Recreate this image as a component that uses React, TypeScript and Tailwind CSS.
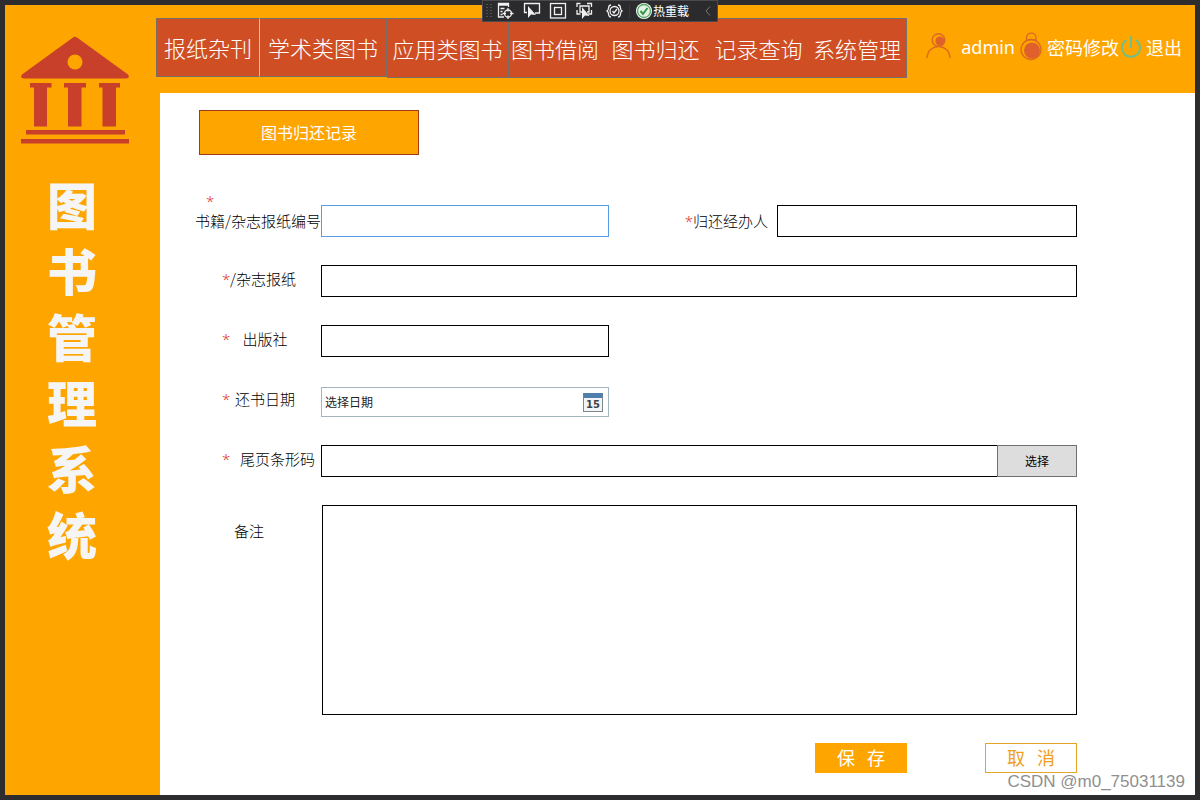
import React, { useState } from 'react';

const navItems = [
    { text: '报纸杂刊', size: 'w-[104px] h-[59px] border-l border-r-[#d9d36a]' },
    { text: '学术类图书', size: 'w-[127px] h-[59px] border-r-[#77706a]' },
    { text: '应用类图书', size: 'w-[122px] h-[60px] border-r-[#77706a]' },
    { text: '图书借阅', size: 'w-[93px] h-[60px] border-r-[#77706a]' },
    { text: '图书归还', size: 'w-[108px] h-[60px] border-r-[#77706a]' },
    { text: '记录查询', size: 'w-[98px] h-[60px] border-r-[#77706a]' },
    { text: '系统管理', size: 'w-[99px] h-[60px] border-r-[#77706a]' },
];

const Logo = () => (
    <svg viewBox="0 0 108 108" className="w-[108px] h-[108px]" fill="#c8402a">
        <path d="M52 1.5 Q54 0 56 1.5 L107 38.5 Q109.5 42.5 105 42.5 H3 Q-1.5 42.5 1 38.5 Z" />
        <circle cx="54" cy="26" r="7.5" fill="#ffa500" />
        <path d="M9 47h21.500v4.500h-4.500v39h-13v-39h-4zM43 47h22v4.500h-4.500v39h-13.500v-39h-4zM78 47h21v4.500h-4v39h-13.500v-39h-3.500z" />
        <path d="M5 94h99v4.500H5zM0 103h108v4.500H0z" />
    </svg>
);

const UserIcon = () => (
    <svg viewBox="0 0 26 30" className="w-[26px] h-[30px]" fill="none" stroke="#dc6a1e" strokeWidth="1.4">
        <circle cx="12.500" cy="8" r="6.300" />
        <circle cx="14" cy="9" r="4.600" fill="#e0602c" stroke="none" />
        <path d="M1 26 C1.500 18 7 14.500 12.500 14.500 C18 14.500 23.500 18 24 26" />
    </svg>
);

const LockIcon = () => (
    <svg viewBox="0 0 22 30" className="w-[22px] h-[30px]" fill="none" stroke="#dc6a1e" strokeWidth="1.3">
        <path d="M6.500 8.500 V6 C6.500 -0.500 16 -0.500 16 6 V8.500 Q11 6.500 6.500 8.500" />
        <circle cx="11" cy="17.500" r="10" />
        <circle cx="12" cy="18.500" r="8" fill="#e0602c" stroke="none" />
    </svg>
);

const PowerIcon = () => (
    <svg viewBox="0 0 20 22" className="w-5 h-[22px]" fill="none" stroke="#6fbf86" strokeWidth="2">
        <path d="M10 0v12" />
        <path d="M5.500 4 A9 9 0 1 0 14.500 4" />
    </svg>
);

// debug bar floating over the window
const DebugBar = () => (
    <div className="absolute top-0 left-1/2 -translate-x-1/2 w-[236px] h-[22px] bg-[#2b2b2e] border border-[#4a4a4f] flex items-center text-white">
        <svg viewBox="0 0 152 20" className="w-[152px] h-5 shrink-0" fill="none" stroke="#f0f0f0" strokeWidth="1.3">
            <path d="M4 3v14M8 3v14" stroke="#66666c" strokeDasharray="1 2" />
            <path d="M21 16H15.500V2.500H25.500V6" />
            <path d="M15 3.500h11" strokeWidth="2.5" />
            <path d="M17.500 7.500h4M17.500 10.500h2M17.500 13.500h2" />
            <circle cx="25" cy="12.500" r="3.500" />
            <path d="M25 7v3.500M25 14.500V18M19.500 12.500H23M27 12.500h3.500" />
            <path d="M44 11.500h-2.500V2.500h15V12H52" />
            <path d="M45 5v12l3-3.500 5 .5z" fill="#f0f0f0" stroke="none" />
            <rect x="67.500" y="2.500" width="15" height="14.500" />
            <rect x="71.500" y="6.500" width="7" height="7" />
            <path d="M94 6V2.500h3.500M104 2.500h4.500V6M94 9v4h3.500M108.500 9v4H105M99 11h-2V5h9v6h-2" />
            <path d="M99 6v12l3-3.500 4.500.5z" fill="#f0f0f0" stroke="none" />
            <path d="M128 4c-4 0-1 4.500-4 6 3 1.500 0 6 4 6M135 4c4 0 1 4.500 4 6-3 1.500 0 6-4 6" />
            <circle cx="131.500" cy="10" r="4.500" />
            <path d="M129.500 10l1.500 2 3-4" />
            <path d="M146.500 4v13" stroke="#3b3b3f" />
        </svg>
        <svg viewBox="0 0 18 18" className="w-[18px] h-[18px] shrink-0">
            <circle cx="9" cy="9" r="8" fill="#fff" />
            <circle cx="9" cy="9" r="6.500" fill="#e4f2e6" stroke="#55a566" strokeWidth="1.300" />
            <path d="M5.500 9l2.500 3 4.500-6" fill="none" stroke="#2f9a45" strokeWidth="2" />
        </svg>
        <span className="text-[12px] leading-5 whitespace-nowrap">热重载</span>
        <svg viewBox="0 0 6 10" className="w-1.5 h-2.5 ml-auto mr-1.5" fill="none" stroke="#77777c">
            <path d="M5 .5L1 5l4 4.500" />
        </svg>
    </div>
);

interface FieldLabelProps {
    htmlFor: string;
    text: string;
    required?: boolean;
    textClass?: string;
}

const Star = () => <span className="text-[#e03030] font-['Noto_Sans',sans-serif]">*</span>;

const FieldLabel: React.FC<FieldLabelProps> = ({ htmlFor, text, required = true, textClass = 'justify-center w-[62px]' }) => (
    <label htmlFor={htmlFor} className="flex pl-[26px] h-7 leading-7 whitespace-nowrap">
        <span className="w-3 shrink-0">{required && <Star />}</span>
        <span className={`flex ${textClass}`}>{text}</span>
    </label>
);

const App: React.FC = () => {
    const [date, setDate] = useState('');

    return (
        <div className="relative min-h-screen bg-[#2d2d30] p-[5px] flex font-['Noto_Sans_CJK_SC',sans-serif]">
            <div className="flex flex-1 bg-[#ffa500]">
                <aside className="w-[151px] shrink-0 pl-4 pt-[31px]">
                    <Logo />
                    <h1 className="mt-[26px] w-[102px] flex flex-col items-center text-[50px] leading-[66px] font-black text-[#f5f5f5]">
                        {'图书管理系统'.split('').map((c) => (
                            <span key={c}>{c}</span>
                        ))}
                    </h1>
                </aside>

                <div className="flex flex-col flex-1">
                    <header className="h-[88px] pt-[13px] pr-[13px] flex items-start justify-between text-white">
                        <nav className="flex items-start">
                            {navItems.map((item) => (
                                <button
                                    key={item.text}
                                    className={`${item.size} shrink-0 border-y border-r border-y-[#77706a] border-l-[#77706a] bg-[#cf4e23] text-[22px] font-light whitespace-nowrap`}
                                >
                                    {item.text}
                                </button>
                            ))}
                        </nav>
                        <div className="flex items-center h-[58px] text-[18px] whitespace-nowrap">
                            <UserIcon />
                            <span className="ml-[9px] font-['Noto_Sans',sans-serif]">admin</span>
                            <button className="ml-[5px] flex items-center gap-[5px]">
                                <LockIcon />
                                密码修改
                            </button>
                            <button className="ml-0.5 flex items-center gap-[5px]">
                                <PowerIcon />
                                退出
                            </button>
                        </div>
                    </header>

                    <main className="flex-1 ml-1 bg-white pt-[17px] pl-9 pr-[118px] text-black">
                        <button className="ml-[3px] w-[220px] h-[45px] pb-0.5 border border-[#a03a1a] bg-[#ffa500] text-base text-white">
                            图书归还记录
                        </button>

                        <form className="mt-[38px] text-[15px] font-light" onSubmit={(e) => e.preventDefault()}>
                            <div className="grid grid-cols-[125px_288fr_168px_300fr] gap-y-7">
                                <label htmlFor="bookNo" className="flex flex-col items-end pb-1 whitespace-nowrap">
                                    <span className="w-full pl-2.5 h-4 leading-4">
                                        <Star />
                                    </span>
                                    <span className="h-6 leading-6">书籍/杂志报纸编号</span>
                                </label>
                                <input id="bookNo" type="text" className="self-end w-full h-8 px-1 border border-[#569de5] outline-none" />
                                <label htmlFor="operator" className="self-end h-8 leading-8 pr-[9px] text-right">
                                    <Star />
                                    归还经办人
                                </label>
                                <input id="operator" type="text" className="self-end w-full h-8 px-1 border border-black" />

                                <FieldLabel htmlFor="bookName" text="/杂志报纸" textClass="justify-end w-[62px]" />
                                <input id="bookName" type="text" className="col-span-3 h-8 px-1 border border-black" />

                                <FieldLabel htmlFor="publisher" text="出版社" />
                                <input id="publisher" type="text" className="h-8 px-1 border border-black" />

                                <div className="col-start-1">
                                    <FieldLabel htmlFor="returnDate" text="还书日期" />
                                </div>
                                <div className="h-8 flex items-end">
                                    <div className="flex items-center justify-between w-full h-[30px] pl-[3px] pr-[5px] border border-[#a5b5bf]">
                                        <input
                                            id="returnDate"
                                            type="text"
                                            placeholder="选择日期"
                                            value={date}
                                            onChange={(e) => setDate(e.target.value)}
                                            className="flex-1 min-w-0 text-[12px] font-normal outline-none placeholder:text-[#222]"
                                        />
                                        <button
                                            type="button"
                                            aria-label="选择日期"
                                            className="w-5 h-[19px] border border-[#7d8790] border-t-[5px] border-t-[#4f80ad] bg-[#f3f4f6] text-[10px] leading-[13px] font-bold text-[#3f4347] font-['DejaVu_Sans',sans-serif] flex justify-center"
                                        >
                                            15
                                        </button>
                                    </div>
                                </div>

                                <div className="col-start-1">
                                    <FieldLabel htmlFor="barcode" text="尾页条形码" textClass="flex-1 justify-center" />
                                </div>
                                <div className="col-span-3 flex h-8">
                                    <input id="barcode" type="text" className="flex-1 px-1 border border-r-0 border-black" />
                                    <button type="button" className="w-20 border border-[#707070] bg-[#dddddd] text-[12px] font-normal">
                                        选择
                                    </button>
                                </div>

                                <div className="pt-3">
                                    <FieldLabel htmlFor="remark" text="备注" required={false} textClass="" />
                                </div>
                                <textarea id="remark" className="col-span-3 h-[210px] ml-px p-1 border border-black resize-none" />
                            </div>

                            <div className="mt-7 flex justify-end gap-[78px] text-[18px] leading-6 font-normal whitespace-pre">
                                <button type="submit" className="w-[92px] h-[30px] pb-0.5 bg-[#ffa500] text-white">{'保   存'}</button>
                                <button type="button" className="w-[92px] h-[30px] pb-0.5 border border-[#e5a52a] text-[#f0a020]">{'取   消'}</button>
                            </div>
                        </form>
                    </main>
                </div>
            </div>

            <DebugBar />
            <span className="absolute right-[15px] bottom-1.5 text-[17px] leading-6 text-[#8f8f8f] font-['Liberation_Sans',sans-serif]">
                CSDN @m0_75031139
            </span>
        </div>
    );
};

export default App;
